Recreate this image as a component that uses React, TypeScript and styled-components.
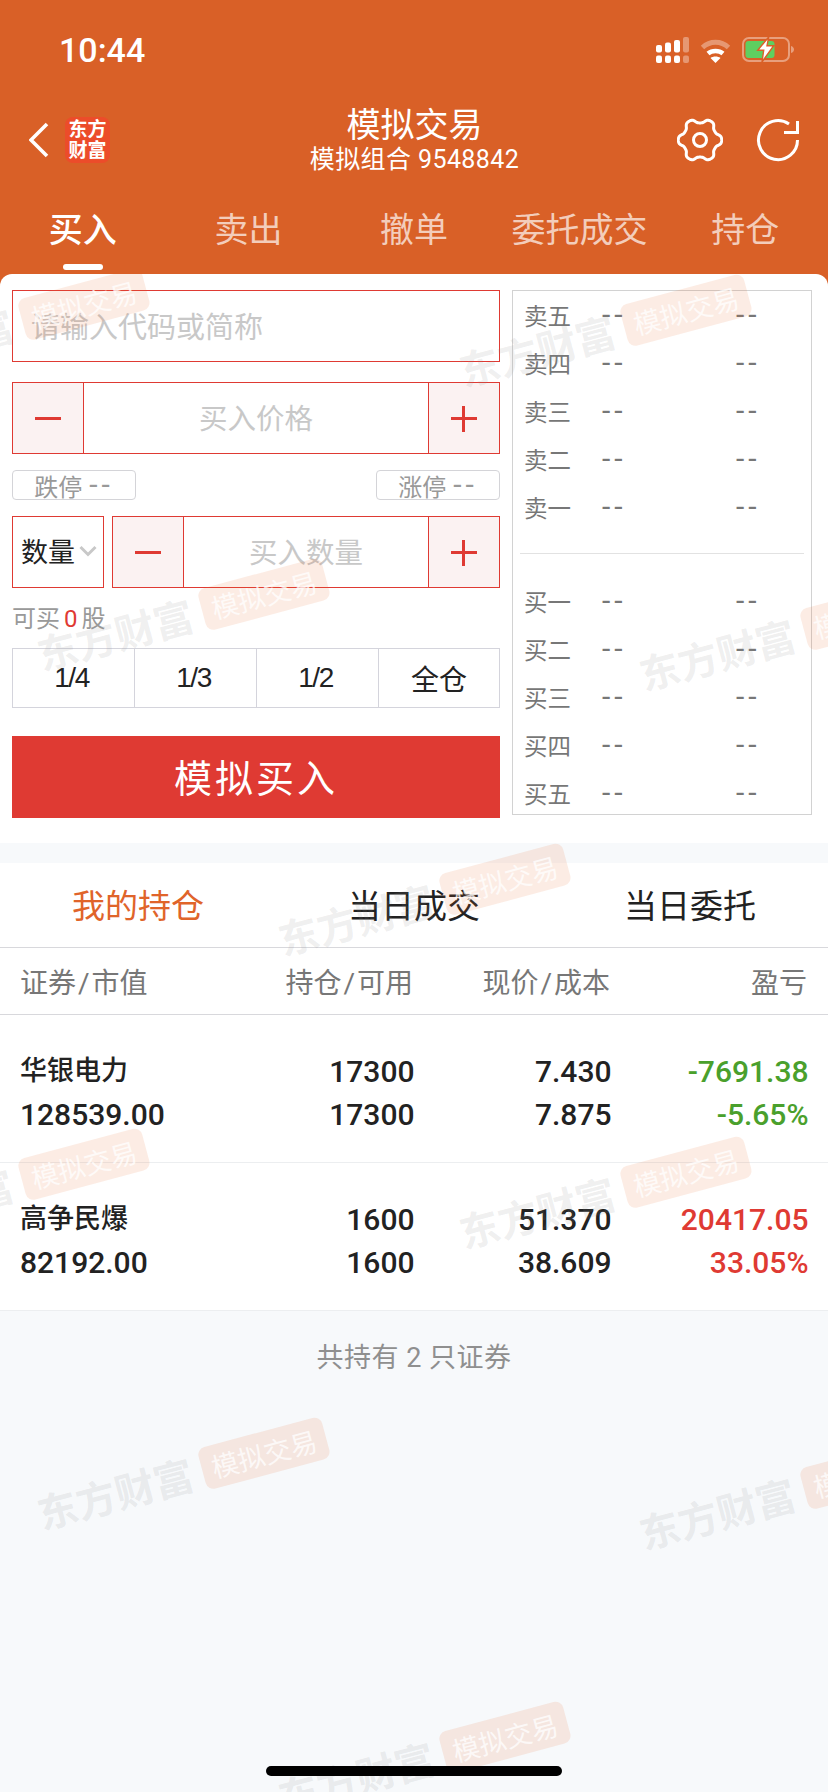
import React from "react";
import styled, { createGlobalStyle } from "styled-components";

const GlobalStyle = createGlobalStyle`
  html, body {
    margin: 0;
    padding: 0;
    background: #f7f9fb;
  }
  * {
    box-sizing: border-box;
  }
`;

const FONT = `Roboto, "Noto Sans CJK SC", sans-serif`;
const ORANGE = "#d96027";
const RED = "#df3a33";
const GREEN = "#4aa02c";

const Page = styled.div`
  position: relative;
  width: 828px;
  height: 1792px;
  overflow: hidden;
  background: #f7f9fb;
  font-family: ${FONT};
`;

const Header = styled.header`
  height: 286px;
  background: ${ORANGE};
  color: #fff;
`;

const StatusBar = styled.div`
  height: 100px;
  display: flex;
  align-items: center;
  justify-content: space-between;
  padding: 0 34px 0 59px;
`;

const Clock = styled.span`
  font-size: 34px;
  font-weight: 500;
`;

const StatusIcons = styled.div`
  display: flex;
  align-items: center;
  gap: 11px;
`;

const NavBar = styled.div`
  height: 80px;
  display: grid;
  grid-template-columns: 1fr auto 1fr;
  align-items: center;
  padding: 0 28px 0 29px;
`;

const NavLeft = styled.div`
  display: flex;
  align-items: center;
  gap: 16px;
`;

const Logo = styled.div`
  width: 45px;
  height: 46px;
  border-radius: 8px;
  background: #ec4c2a;
  font-size: 19px;
  font-weight: 700;
  line-height: 21px;
  text-align: center;
  padding-top: 2px;
`;

const NavTitle = styled.div`
  text-align: center;
`;

const TitleMain = styled.div`
  font-size: 34px;
  line-height: 40px;
`;

const TitleSub = styled.div`
  font-size: 25px;
  line-height: 30px;
  letter-spacing: 0.4px;
`;

const NavRight = styled.div`
  display: flex;
  align-items: center;
  justify-content: flex-end;
  gap: 33px;
`;

const TabBar = styled.nav`
  height: 94px;
  display: grid;
  grid-template-columns: repeat(5, 1fr);
`;

const Tab = styled.div<{ $active?: boolean }>`
  position: relative;
  display: flex;
  align-items: center;
  justify-content: center;
  font-size: 34px;
  font-weight: ${(p) => (p.$active ? 500 : 400)};
  color: ${(p) => (p.$active ? "#fff" : "rgba(255,255,255,0.7)")};

  ${(p) =>
    p.$active &&
    `&::after {
      content: "";
      position: absolute;
      left: 50%;
      bottom: 4px;
      width: 40px;
      height: 6px;
      margin-left: -20px;
      border-radius: 3px;
      background: #fff;
    }`}
`;

const TradeCard = styled.section`
  height: 569px;
  margin-top: -12px;
  display: flex;
  gap: 12px;
  padding: 16px 16px 0 12px;
  background: #fff;
  border-radius: 12px 12px 0 0;
`;

const FormColumn = styled.div`
  width: 488px;
  display: flex;
  flex-direction: column;
`;

const SearchBox = styled.div`
  height: 72px;
  display: flex;
  align-items: center;
  padding: 0 0 2px 18px;
  border: 1px solid ${RED};
  color: #c8c8c8;
  font-size: 29px;
`;

const Stepper = styled.div<{ $top?: number }>`
  height: 72px;
  display: flex;
  border: 1px solid ${RED};
  margin-top: ${(p) => p.$top ?? 0}px;
`;

const QuantityStepper = styled(Stepper)`
  flex: 1;
`;

const StepButton = styled.div`
  position: relative;
  width: 71px;
  flex: none;
  background: #fbf2f2;
`;

const MinusButton = styled(StepButton)`
  border-right: 1px solid ${RED};

  &::before {
    content: "";
    position: absolute;
    left: 22px;
    top: 34px;
    width: 26px;
    height: 3px;
    background: ${RED};
  }
`;

const PlusButton = styled(StepButton)`
  border-left: 1px solid ${RED};

  &::before,
  &::after {
    content: "";
    position: absolute;
    background: ${RED};
  }
  &::before {
    left: 22px;
    top: 34px;
    width: 26px;
    height: 3px;
  }
  &::after {
    left: 33px;
    top: 23px;
    width: 3px;
    height: 26px;
  }
`;

const StepValue = styled.div`
  flex: 1;
  display: flex;
  align-items: center;
  justify-content: center;
  padding-bottom: 3px;
  color: #c8c8c8;
  font-size: 28.5px;
`;

const LimitRow = styled.div`
  display: flex;
  justify-content: space-between;
  margin-top: 16px;
`;

const LimitTag = styled.div`
  width: 124px;
  height: 30px;
  display: flex;
  align-items: center;
  justify-content: center;
  gap: 7px;
  border: 1px solid #d4d4d8;
  border-radius: 4px;
  color: #999;
  font-size: 24px;
`;

const Dash = styled.span`
  font-size: 30px;
  letter-spacing: 4px;
  line-height: 1;
`;

const QuantityRow = styled.div`
  display: flex;
  gap: 8px;
  margin-top: 16px;
`;

const UnitSelect = styled.div`
  width: 92px;
  height: 72px;
  display: flex;
  align-items: center;
  gap: 4px;
  padding: 0 0 3px 8px;
  border: 1px solid ${RED};
  color: #222;
  font-size: 27px;
`;

const Affordable = styled.div`
  margin-top: 15px;
  color: #999;
  font-size: 24px;
  line-height: 32px;
`;

const AffordableCount = styled.span`
  color: ${RED};
  margin: 0 4px;
`;

const FractionRow = styled.div`
  height: 60px;
  display: grid;
  grid-template-columns: 121px 122px 122px 1fr;
  margin-top: 13px;
  border: 1px solid #d4d4dc;
`;

const Fraction = styled.div<{ $tight?: boolean }>`
  display: flex;
  align-items: center;
  justify-content: center;
  padding-right: ${(p) => (p.$tight ? 4 : 0)}px;
  color: #222;
  font-family: "Liberation Sans", "Noto Sans CJK SC", sans-serif;
  font-size: 28px;
  letter-spacing: ${(p) => (p.$tight ? "-1.5px" : "0")};

  & + & {
    border-left: 1px solid #d4d4dc;
  }
`;

const SubmitButton = styled.div`
  height: 82px;
  display: flex;
  align-items: center;
  justify-content: center;
  margin-top: 28px;
  padding-bottom: 4px;
  background: ${RED};
  color: #fff;
  font-size: 38px;
  letter-spacing: 3px;
`;

const BookPanel = styled.div`
  width: 300px;
  height: 525px;
  display: flex;
  flex-direction: column;
  border: 1px solid #d2d2d2;
`;

const BookRow = styled.div`
  height: 48px;
  flex: none;
  display: grid;
  grid-template-columns: 78px 134px 1fr;
  align-items: center;
  padding-left: 11px;
  color: #777;
  font-size: 23.5px;
`;

const BookDivider = styled.div`
  height: 46px;
  flex: none;
  display: flex;
  align-items: center;
  padding: 0 7px 2px;

  &::before {
    content: "";
    flex: 1;
    height: 1px;
    background: #e2e2e2;
  }
`;

const PositionTabs = styled.div`
  height: 85px;
  display: grid;
  grid-template-columns: repeat(3, 276px);
  margin-top: 20px;
  background: #fff;
  border-bottom: 1px solid #d8d8dc;
`;

const PositionTab = styled.div<{ $active?: boolean }>`
  display: flex;
  align-items: center;
  justify-content: center;
  padding-bottom: 3px;
  font-size: 33px;
  color: ${(p) => (p.$active ? "#e0642a" : "#222")};
`;

const tableGrid = `
  display: grid;
  grid-template-columns: 196px 197px 197px 197px;
  padding-left: 20px;
  padding-right: 21px;
  background: #fff;
`;

const TableHead = styled.div`
  ${tableGrid}
  height: 67px;
  align-items: center;
  border-bottom: 1px solid #d8d8dc;
  color: #777;
  font-size: 28px;
`;

const Slash = styled.span`
  margin: 0 2px;
`;

const TableRow = styled.div`
  ${tableGrid}
  height: 148px;
  padding-top: 9px;
  align-content: center;
  border-bottom: 1px solid #eceef0;
`;

const Cell = styled.div<{ $color?: string; $left?: boolean }>`
  height: 43px;
  line-height: 43px;
  text-align: ${(p) => (p.$left ? "left" : "right")};
  margin-right: ${(p) => (p.$left ? 0 : -1.5)}px;
  font-size: 30px;
  font-weight: 500;
  color: ${(p) => p.$color ?? "#222"};
`;

const NameCell = styled(Cell)`
  font-size: 27px;
`;

const HeadCell = styled.div<{ $left?: boolean }>`
  text-align: ${(p) => (p.$left ? "left" : "right")};
`;

const Footnote = styled.div`
  padding-top: 27px;
  text-align: center;
  color: #8f8f8f;
  font-size: 27px;
  letter-spacing: 0.5px;
  line-height: 40px;
`;

const MarkLayer = styled.div`
  position: absolute;
  left: 0;
  right: 0;
  top: 274px;
  bottom: 0;
  overflow: hidden;
  pointer-events: none;
`;

const Mark = styled.div<{ $x: number; $y: number }>`
  position: absolute;
  left: ${(p) => p.$x - 234}px;
  top: ${(p) => p.$y - 274 - 22}px;
  display: flex;
  align-items: center;
  gap: 8px;
  transform-origin: 234px 22px;
  transform: rotate(-15deg);
`;

const MarkBrand = styled.div`
  width: 162px;
  color: rgba(140, 140, 140, 0.14);
  font-size: 40px;
  font-weight: 700;
  white-space: nowrap;
`;

const MarkPill = styled.div`
  width: 128px;
  height: 43px;
  display: flex;
  align-items: center;
  justify-content: center;
  border-radius: 8px;
  background: rgba(232, 110, 50, 0.13);
  color: rgba(255, 255, 255, 0.75);
  font-size: 27px;
  white-space: nowrap;
`;

const HomeBar = styled.div`
  position: absolute;
  left: 266px;
  top: 1766px;
  width: 296px;
  height: 10px;
  border-radius: 5px;
  background: #000;
`;

const SignalIcon = () => (
  <svg width="33" height="26" viewBox="0 0 33 26" fill="#fff">
    <rect x="0" y="8" width="6" height="7.5" rx="2" />
    <rect x="9" y="5.5" width="6" height="10" rx="2" />
    <rect x="18" y="3" width="6" height="12.5" rx="2" />
    <rect x="27" y="0" width="6" height="15.5" rx="2" opacity="0.35" />
    <rect x="0" y="18.5" width="6" height="7.5" rx="2" />
    <rect x="9" y="18.5" width="6" height="7.5" rx="2" />
    <rect x="18" y="18.5" width="6" height="7.5" rx="2" />
    <rect x="27" y="18.5" width="6" height="7.5" rx="2" opacity="0.35" />
  </svg>
);

const WifiIcon = () => (
  <svg width="31" height="25" viewBox="0 0 31 25" fill="none">
    <path d="M2.5 9.5C10 2.5 21 2.5 28.5 9.5" stroke="#fff" strokeOpacity="0.35" strokeWidth="5" />
    <path d="M8 15.5C12 12 19 12 23 15.5" stroke="#fff" strokeWidth="4.5" />
    <path d="M10.5 20C13 18 18 18 20.5 20L15.5 25Z" fill="#fff" />
  </svg>
);

const BatteryIcon = () => (
  <svg width="52" height="26" viewBox="0 0 52 26" fill="none">
    <rect x="1" y="1" width="46" height="23" rx="6" stroke="#fff" strokeOpacity="0.4" strokeWidth="2" />
    <rect x="3.5" y="4" width="29" height="17" rx="3" fill="#5fcf60" />
    <path d="M49 9C51 9.5 52 11 52 12.5S51 15.5 49 16Z" fill="#fff" fillOpacity="0.4" />
    <path d="M26.7 0L15.7 13.3H21.7L20 25L31.7 8.7H25Z" fill="#fff" stroke={ORANGE} strokeWidth="1.4" />
  </svg>
);

const BackIcon = () => (
  <svg width="20" height="36" viewBox="0 0 20 36" fill="none">
    <path d="M18 2L2 18L18 34" stroke="#fff" strokeWidth="3.6" />
  </svg>
);

// six lobed outline of the settings gear, lobes flattened a little
const gearPath = () => {
  const points: string[] = [];
  for (let i = 0; i < 144; i++) {
    const angle = (i / 144) * Math.PI * 2;
    const radius = 19.4 + (2.3 * Math.tanh(1.5 * Math.cos(6 * angle))) / Math.tanh(1.5);
    points.push(`${(23 + radius * Math.cos(angle)).toFixed(2)} ${(23 + radius * Math.sin(angle)).toFixed(2)}`);
  }
  return `M${points.join("L")}Z`;
};

const GearIcon = () => (
  <svg width="46" height="46" viewBox="0 0 46 46" fill="none" stroke="#fff" strokeWidth="3">
    <path d={gearPath()} strokeLinejoin="round" />
    <circle cx="23" cy="23" r="6.5" />
  </svg>
);

const RefreshIcon = () => (
  <svg width="44" height="44" viewBox="0 0 44 44" fill="none" stroke="#fff" strokeWidth="3">
    <path d="M41.5 22A19.5 19.5 0 1 1 33 6" />
    <path d="M41.5 3V14.5H28" />
  </svg>
);

const ChevronIcon = () => (
  <svg width="18" height="12" viewBox="0 0 18 12" fill="none">
    <path d="M1.5 2L9 9.5L16.5 2" stroke="#c8c8c8" strokeWidth="3" />
  </svg>
);

const tabs = ["买入", "卖出", "撤单", "委托成交", "持仓"];
const fractions = ["1/4", "1/3", "1/2", "全仓"];
const sellLevels = ["卖五", "卖四", "卖三", "卖二", "卖一"];
const buyLevels = ["买一", "买二", "买三", "买四", "买五"];
const positionTabs = ["我的持仓", "当日成交", "当日委托"];

const holdings = [
  {
    name: "华银电力",
    value: "128539.00",
    held: "17300",
    free: "17300",
    price: "7.430",
    cost: "7.875",
    gain: "-7691.38",
    rate: "-5.65%",
    color: GREEN,
  },
  {
    name: "高争民爆",
    value: "82192.00",
    held: "1600",
    free: "1600",
    price: "51.370",
    cost: "38.609",
    gain: "20417.05",
    rate: "33.05%",
    color: RED,
  },
];

const marks = [
  [82, 297],
  [684, 303],
  [262, 587],
  [864, 607],
  [503, 872],
  [82, 1157],
  [684, 1165],
  [262, 1446],
  [864, 1466],
  [503, 1730],
];

const BookLevel = ({ label }: { label: string }) => (
  <BookRow>
    <span>{label}</span>
    <Dash>--</Dash>
    <Dash>--</Dash>
  </BookRow>
);

const HeadLabel = ({ left, right }: { left: string; right: string }) => (
  <>
    {left}
    <Slash>/</Slash>
    {right}
  </>
);

export default function App() {
  return (
    <Page>
      <GlobalStyle />
      <Header>
        <StatusBar>
          <Clock>10:44</Clock>
          <StatusIcons>
            <SignalIcon />
            <WifiIcon />
            <BatteryIcon />
          </StatusIcons>
        </StatusBar>
        <NavBar>
          <NavLeft>
            <BackIcon />
            <Logo>
              东方
              <br />
              财富
            </Logo>
          </NavLeft>
          <NavTitle>
            <TitleMain>模拟交易</TitleMain>
            <TitleSub>模拟组合 9548842</TitleSub>
          </NavTitle>
          <NavRight>
            <GearIcon />
            <RefreshIcon />
          </NavRight>
        </NavBar>
        <TabBar>
          {tabs.map((tab, i) => (
            <Tab key={tab} $active={i === 0}>
              {tab}
            </Tab>
          ))}
        </TabBar>
      </Header>

      <TradeCard>
        <FormColumn>
          <SearchBox>请输入代码或简称</SearchBox>
          <Stepper $top={20}>
            <MinusButton />
            <StepValue>买入价格</StepValue>
            <PlusButton />
          </Stepper>
          <LimitRow>
            <LimitTag>
              <span>跌停</span>
              <Dash>--</Dash>
            </LimitTag>
            <LimitTag>
              <span>涨停</span>
              <Dash>--</Dash>
            </LimitTag>
          </LimitRow>
          <QuantityRow>
            <UnitSelect>
              <span>数量</span>
              <ChevronIcon />
            </UnitSelect>
            <QuantityStepper>
              <MinusButton />
              <StepValue>买入数量</StepValue>
              <PlusButton />
            </QuantityStepper>
          </QuantityRow>
          <Affordable>
            可买<AffordableCount>0</AffordableCount>股
          </Affordable>
          <FractionRow>
            {fractions.map((f) => (
              <Fraction key={f} $tight={f.includes("/")}>
                {f}
              </Fraction>
            ))}
          </FractionRow>
          <SubmitButton>模拟买入</SubmitButton>
        </FormColumn>
        <BookPanel>
          {sellLevels.map((l) => (
            <BookLevel key={l} label={l} />
          ))}
          <BookDivider />
          {buyLevels.map((l) => (
            <BookLevel key={l} label={l} />
          ))}
        </BookPanel>
      </TradeCard>

      <PositionTabs>
        {positionTabs.map((t, i) => (
          <PositionTab key={t} $active={i === 0}>
            {t}
          </PositionTab>
        ))}
      </PositionTabs>
      <TableHead>
        <HeadCell $left>
          <HeadLabel left="证券" right="市值" />
        </HeadCell>
        <HeadCell>
          <HeadLabel left="持仓" right="可用" />
        </HeadCell>
        <HeadCell>
          <HeadLabel left="现价" right="成本" />
        </HeadCell>
        <HeadCell>盈亏</HeadCell>
      </TableHead>
      {holdings.map((h) => (
        <TableRow key={h.name}>
          <NameCell $left>{h.name}</NameCell>
          <Cell>{h.held}</Cell>
          <Cell>{h.price}</Cell>
          <Cell $color={h.color}>{h.gain}</Cell>
          <Cell $left>{h.value}</Cell>
          <Cell>{h.free}</Cell>
          <Cell>{h.cost}</Cell>
          <Cell $color={h.color}>{h.rate}</Cell>
        </TableRow>
      ))}
      <Footnote>共持有 2 只证券</Footnote>

      <MarkLayer>
        {marks.map(([x, y]) => (
          <Mark key={`${x}-${y}`} $x={x} $y={y}>
            <MarkBrand>东方财富</MarkBrand>
            <MarkPill>模拟交易</MarkPill>
          </Mark>
        ))}
      </MarkLayer>
      <HomeBar />
    </Page>
  );
}
